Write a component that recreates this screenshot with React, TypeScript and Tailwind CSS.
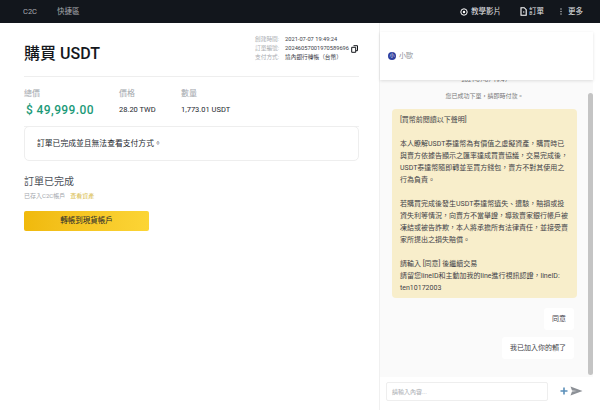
import React from "react";

function Msg({ children }: { children: React.ReactNode }) {
  return <p className="h-[12px] whitespace-nowrap">{children}</p>;
}

export default function App() {
  return (
    <div className="w-[600px] h-[410px] overflow-hidden bg-white flex flex-col font-['Roboto','Noto_Sans_CJK_TC',sans-serif]">
      <header className="h-[23px] shrink-0 bg-[#12161c] flex items-center justify-between pl-[23px] pr-[17px] text-[7.5px] text-[#d5d7db]">
        <div className="flex items-center gap-[20px] text-[#a8abb0]">
          <span>C2C</span>
          <span>快捷區</span>
        </div>
        <div className="flex items-center text-[#e4e5e7]">
          <span className="flex items-center gap-[3px] mr-[19px]">
            <svg width="8" height="8" viewBox="0 0 8 8"><circle cx="4" cy="4" r="3.2" fill="none" stroke="#fff" strokeWidth="1"/><circle cx="4" cy="4" r="1.2" fill="#fff"/></svg>
            教學影片
          </span>
          <span className="flex items-center gap-[2px] mr-[16px]">
            <svg width="7" height="9" viewBox="0 0 7 9"><path d="M1 .7h3.2L6.2 2.7v5.6H1z" fill="none" stroke="#fff" strokeWidth="1.1"/><path d="M3 5h1.4" stroke="#fff"/></svg>
            訂單
          </span>
          <span className="flex items-center gap-[6px]">
            <svg width="2" height="7" viewBox="0 0 2 7"><circle cx="1" cy="1" r=".7" fill="#ccc"/><circle cx="1" cy="3.5" r=".7" fill="#ccc"/><circle cx="1" cy="6" r=".7" fill="#ccc"/></svg>
            更多
          </span>
        </div>
      </header>

      <div className="flex-1 flex min-h-0">
        <main className="w-[380px] shrink-0 pl-[24px] pr-[20px] pt-[9px] border-r border-[#f0f0f0]">
          <div className="h-[45px] flex items-start justify-between border-b border-[#eeeeee]">
            <h1 className="mt-[10px] text-[16px] leading-[24px] font-medium text-[#14171c]">購買 USDT</h1>
            <div className="text-[5.7px] leading-[9px] text-[#3c4048] mt-[3px] mr-[1px]">
              <div className="flex gap-[4px]"><span className="w-[26px] text-[#a8abb0]">創建時間:</span><span>2021-07-07 19:49:24</span></div>
              <div className="flex gap-[4px] items-center"><span className="w-[26px] text-[#a8abb0]">訂單編號:</span><span>20246057001970589696</span>
                <svg width="7" height="8" viewBox="0 0 7 8" className="-ml-[2px]"><path d="M2.5.7h4v5h-1.5M.7 2.3h4v5h-4z" fill="none" stroke="#14171c" strokeWidth="1"/></svg>
              </div>
              <div className="flex gap-[4px]"><span className="w-[26px] text-[#a8abb0]">支付方式:</span><span>境內銀行轉帳（台幣）</span></div>
            </div>
          </div>

          <div className="flex mt-[11px] h-[36px] border-b border-[#f0f0f0] box-content pb-[2px]">
            <div className="w-[95px]">
              <div className="text-[8px] leading-[12px] text-[#a3a7ad]">總價</div>
              <div className="text-[12px] leading-[20px] font-medium text-[#1c9a78] tracking-[.4px] pl-[2px]">$ 49,999.00</div>
            </div>
            <div className="w-[62px]">
              <div className="text-[8px] leading-[12px] text-[#a3a7ad]">價格</div>
              <div className="text-[7.5px] leading-[20px] text-[#23272e]">28.20 TWD</div>
            </div>
            <div>
              <div className="text-[8px] leading-[12px] text-[#a3a7ad]">數量</div>
              <div className="text-[7.5px] leading-[20px] text-[#23272e]">1,773.01 USDT</div>
            </div>
          </div>

          <div className="h-[35px] -mt-[1px] rounded-[5px] border border-[#eeeeee] flex items-center pl-[12px] text-[7.8px] text-[#23272e]">
            訂單已完成並且無法查看支付方式。
          </div>

          <div className="mt-[14px] text-[10px] leading-[14px] text-[#4c5058]">訂單已完成</div>
          <div className="mt-[1px] text-[6px] leading-[12px] text-[#a3a7ad]">
            已存入C2C帳戶<span className="ml-[5px] text-[#d9bd4f]">查看資產</span>
          </div>
          <button className="mt-[9px] w-[125px] h-[20px] rounded-[2px] bg-gradient-to-r from-[#f0b90b] to-[#fcd535] text-[7.5px] text-[#23272e] flex items-center justify-center">
            轉帳到現貨帳戶
          </button>
        </main>

        <aside className="w-[213px] shrink-0 flex flex-col pt-[9px] pb-[5px]">
          <div className="relative z-10 h-[48px] shrink-0 bg-white shadow-[0_1px_3px_rgba(0,0,0,.12)] flex items-center pl-[8px] gap-[3px] text-[7px] text-[#8a8e95]">
            <span className="w-[8px] h-[8px] rounded-full bg-[#2f3f9e] flex items-center justify-center text-[5px] text-white">小</span>
            小歐
          </div>
          <div className="relative flex-1 min-h-0 bg-[#fafafa] overflow-hidden">
            <div className="h-[3px] text-center text-[6px] leading-[6px] text-[#777] pr-[4px] -translate-y-[3px]">2021-07-07 19:47</div>
            <div className="mt-[8px] text-center text-[6px] leading-[10px] text-[#777] pr-[4px]">您已成功下單，請即時付款。</div>
            <div className="absolute right-0 top-[13px] bottom-[2px] w-[5px] rounded-full bg-[#c4c4c4]"></div>
            <div className="ml-[12px] mt-[8px] w-[185px] rounded-[4px] bg-[#f8eecb] pl-[8px] pt-[5px] pb-[4px] text-[7px] leading-[12px] text-[#3f4248]">
              <Msg>[買幣前閱讀以下聲明]</Msg>
              <Msg>&nbsp;</Msg>
              <Msg>本人瞭解USDT泰達幣為有價值之虛擬資產，購買時已</Msg>
              <Msg>與賣方依據告顯示之匯率達成買賣協議，交易完成後，</Msg>
              <Msg>USDT泰達幣隨即轉並至買方錢包，賣方不對其使用之</Msg>
              <Msg>行為負責。</Msg>
              <Msg>&nbsp;</Msg>
              <Msg>若購買完成後發生USDT泰達幣遺失、遭駭，賠損或投</Msg>
              <Msg>資失利等情況，向賣方不當舉證，導致賣家銀行帳戶被</Msg>
              <Msg>凍結或被告詐欺，本人將承擔所有法律責任，並接受賣</Msg>
              <Msg>家所提出之損失賠償。</Msg>
              <Msg>&nbsp;</Msg>
              <Msg>請輸入 [同意] 後繼續交易</Msg>
              <Msg>請留您lineID和主動加我的line進行視訊認證，lineID:</Msg>
              <Msg>ten10172003</Msg>
            </div>
            <div className="flex flex-col items-end mr-[19px] mt-[10px] gap-[7px] text-[7px] text-[#3f4248]">
              <div className="h-[22px] px-[8px] bg-white rounded-[3px] flex items-center">同意</div>
              <div className="h-[22px] px-[8px] bg-white rounded-[3px] flex items-center">我已加入你的賴了</div>
            </div>
          </div>
          <div className="h-[28px] shrink-0 bg-white flex items-center pl-[6px] pr-[6px]">
            <div className="w-[162px] h-[19px] rounded-[2px] border border-[#eeeeee] flex items-center pl-[5px] text-[6px] text-[#a8abb0]">請輸入內容...</div>
            <svg width="8" height="8" viewBox="0 0 8 8" className="ml-[12px]"><path d="M4 .5v7M.5 4h7" stroke="#5b8fb9" strokeWidth="1.6"/></svg>
            <svg width="13" height="10" viewBox="0 0 13 10" className="ml-[2px]"><path d="M.5.5 12.5 5 .5 9.5 2 5.6 7 5 2 4.4z" fill="#8c9096"/></svg>
          </div>
        </aside>
      </div>
    </div>
  );
}
